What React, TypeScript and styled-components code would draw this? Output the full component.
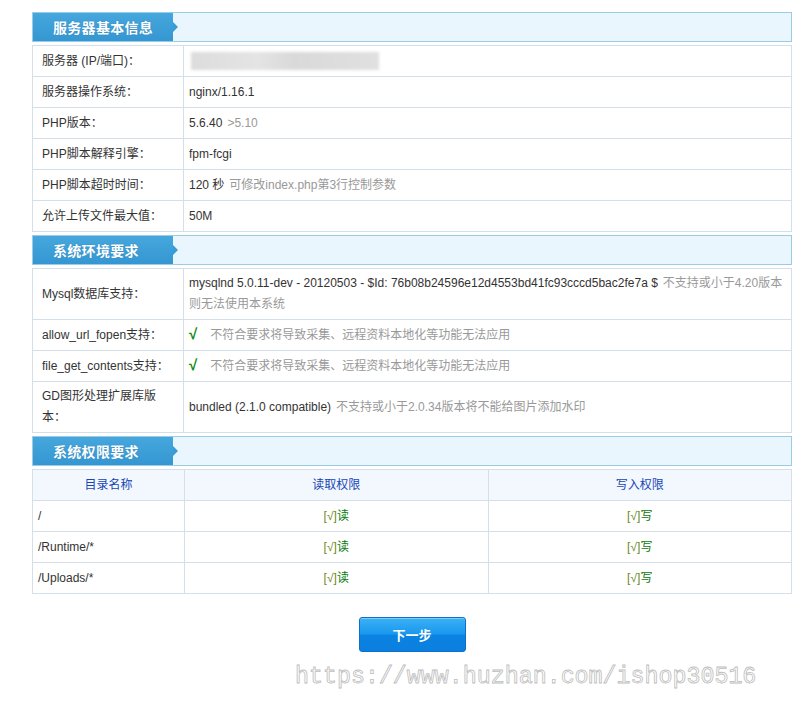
import React from 'react';
import styled, { createGlobalStyle } from 'styled-components';

const GlobalStyle = createGlobalStyle`
    body {
        margin: 0;
        background: #fff;
        font-family: "Liberation Sans", "Noto Sans CJK SC", sans-serif;
        font-size: 12px;
        color: #333;
    }
`;

const Page = styled.div`
    width: 760px;
    padding: 12px 0 0 32px;
`;

const SectionHead = styled.div`
    height: 28px;
    border: 1px solid #9ccbe4;
    background: #eaf6fd;
    display: flex;
    margin-bottom: 3px;
`;

const SectionTab = styled.div`
    position: relative;
    width: 140px;
    background: linear-gradient(#46a7dd, #3597d2);
    color: #fff;
    font-family: "Noto Sans CJK SC", sans-serif;
    font-weight: bold;
    font-size: 14px;
    line-height: 28px;
    text-indent: 20px;
    letter-spacing: 0.3px;
    text-shadow: 0 0 1px rgba(0, 60, 110, 0.4);

    &::after {
        content: '';
        position: absolute;
        right: -5px;
        top: 9px;
        border-style: solid;
        border-width: 5px 0 5px 5px;
        border-color: transparent transparent transparent #3a9cd6;
    }
`;

const InfoTable = styled.table<{ $gap?: number }>`
    width: 760px;
    border-collapse: collapse;
    margin-bottom: ${(p) => p.$gap ?? 3}px;
    table-layout: fixed;

    td, th {
        border: 1px solid #d5dfe9;
        line-height: 21px;
        padding: 4px 9px;
        vertical-align: middle;
        text-align: left;
        font-weight: normal;
    }

    tr {
        height: 31px;
    }
`;

const LabelCell = styled.td`
    width: 132px;
    color: #333;
`;

const ValueCell = styled.td`
    padding-left: 5px !important;
    padding-right: 2px !important;
    color: #333;
    word-break: break-all;
`;

const Note = styled.span`
    color: #999;
    margin-left: 5px;
`;

const Check = styled.span`
    color: #0a8a0a;
    font-weight: bold;
    font-size: 15px;
    line-height: 1;
    margin-right: 8px;
`;

const BlurredIp = styled.div`
    width: 188px;
    height: 18px;
    margin-left: 2px;
    background: linear-gradient(90deg, #dcdcdc 0%, #e4e4e4 35%, #d9d9d9 55%, #e0e0e0 100%);
    filter: blur(1.5px);
`;

const PermHead = styled.th`
    background: #f2f8fe;
    color: #1846b5;
    text-align: center !important;
`;

const PathCell = styled.td`
    padding-left: 5px !important;
`;

const PermCell = styled.td`
    text-align: center !important;
    color: #0a7a0a;
`;

const Bracket = styled.span`
    color: #6b8a1c;
`;

const ButtonRow = styled.div`
    display: flex;
    justify-content: center;
    padding-top: 23px;
`;

const NextButton = styled.button`
    width: 107px;
    height: 35px;
    border: 1px solid #0c6fc9;
    border-radius: 3px;
    background: linear-gradient(#3bb1f6 0%, #1a98ee 48%, #0b83e3 52%, #0a7fdf 100%);
    box-shadow: inset 0 1px 0 rgba(255, 255, 255, 0.35);
    color: #fff;
    font-family: "Noto Sans CJK SC", sans-serif;
    font-weight: bold;
    font-size: 13px;
    cursor: pointer;
`;

const Watermark = styled.div`
    margin: 12px 0 0 263px;
    font-family: "Liberation Mono", "DejaVu Sans Mono", monospace;
    font-size: 23.3px;
    color: #fff;
    -webkit-text-stroke: 0.8px #bdbdbd;
    white-space: nowrap;
`;

const serverRows: [string, React.ReactNode][] = [
    ['服务器 (IP/端口)：', <BlurredIp />],
    ['服务器操作系统：', 'nginx/1.16.1'],
    ['PHP版本：', <>5.6.40<Note>&gt;5.10</Note></>],
    ['PHP脚本解释引擎：', 'fpm-fcgi'],
    ['PHP脚本超时时间：', <>120 秒<Note>可修改index.php第3行控制参数</Note></>],
    ['允许上传文件最大值：', '50M'],
];

const envRows: [string, React.ReactNode][] = [
    [
        'Mysql数据库支持：',
        <>mysqlnd 5.0.11-dev - 20120503 - $Id: 76b08b24596e12d4553bd41fc93cccd5bac2fe7a $<Note>不支持或小于4.20版本则无法使用本系统</Note></>,
    ],
    ['allow_url_fopen支持：', <><Check>√</Check><Note>不符合要求将导致采集、远程资料本地化等功能无法应用</Note></>],
    ['file_get_contents支持：', <><Check>√</Check><Note>不符合要求将导致采集、远程资料本地化等功能无法应用</Note></>],
    ['GD图形处理扩展库版本：', <>bundled (2.1.0 compatible)<Note>不支持或小于2.0.34版本将不能给图片添加水印</Note></>],
];

const dirs = ['/', '/Runtime/*', '/Uploads/*'];

const App: React.FC = () => (
    <Page>
        <GlobalStyle />

        <SectionHead><SectionTab>服务器基本信息</SectionTab></SectionHead>
        <InfoTable>
            <tbody>
                {serverRows.map(([label, value]) => (
                    <tr key={label}>
                        <LabelCell>{label}</LabelCell>
                        <ValueCell>{value}</ValueCell>
                    </tr>
                ))}
            </tbody>
        </InfoTable>

        <SectionHead><SectionTab>系统环境要求</SectionTab></SectionHead>
        <InfoTable>
            <tbody>
                {envRows.map(([label, value]) => (
                    <tr key={label}>
                        <LabelCell>{label}</LabelCell>
                        <ValueCell>{value}</ValueCell>
                    </tr>
                ))}
            </tbody>
        </InfoTable>

        <SectionHead><SectionTab>系统权限要求</SectionTab></SectionHead>
        <InfoTable $gap={0}>
            <colgroup>
                <col style={{ width: 152 }} />
                <col />
                <col />
            </colgroup>
            <thead>
                <tr>
                    <PermHead>目录名称</PermHead>
                    <PermHead>读取权限</PermHead>
                    <PermHead>写入权限</PermHead>
                </tr>
            </thead>
            <tbody>
                {dirs.map((d) => (
                    <tr key={d}>
                        <PathCell>{d}</PathCell>
                        <PermCell><Bracket>[√]</Bracket>读</PermCell>
                        <PermCell><Bracket>[√]</Bracket>写</PermCell>
                    </tr>
                ))}
            </tbody>
        </InfoTable>

        <ButtonRow>
            <NextButton>下一步</NextButton>
        </ButtonRow>
        <Watermark>https://www.huzhan.com/ishop30516</Watermark>
    </Page>
);

export default App;
